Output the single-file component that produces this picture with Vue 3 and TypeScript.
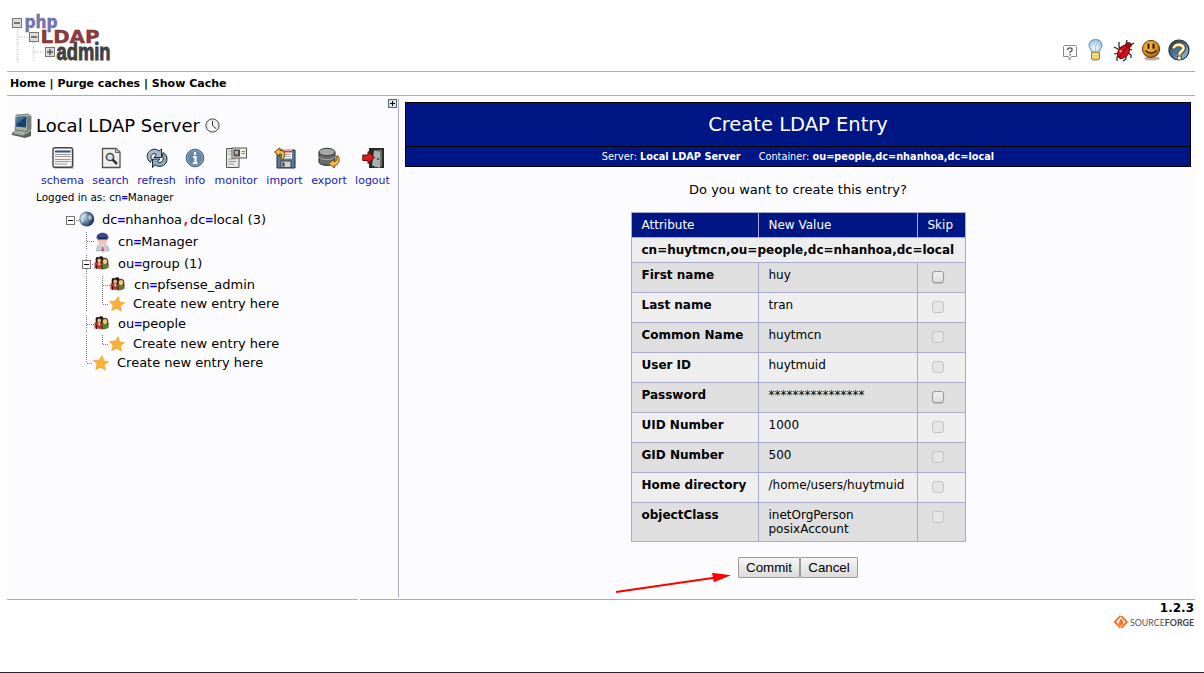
<script setup lang="ts">
interface Tool { name: string; label: string; width: number }
interface Part { t: string; c?: string }
interface Node {
  h: number
  indent: number
  lines: string
  box?: [number, number]
  icon: 'globe' | 'user' | 'group' | 'star'
  gap: number
  shift: number
  parts: Part[]
}
interface Row { attr: string; values: string[]; enabled: boolean }

const tools: Tool[] = [
  { name: 'schema', label: 'schema', width: 43 },
  { name: 'search', label: 'search', width: 37 },
  { name: 'refresh', label: 'refresh', width: 39 },
  { name: 'info', label: 'info', width: 22 },
  { name: 'monitor', label: 'monitor', width: 44 },
  { name: 'import', label: 'import', width: 37 },
  { name: 'export', label: 'export', width: 36 },
  { name: 'logout', label: 'logout', width: 35 },
]

const createParts: Part[] = [{ t: 'Create new entry here' }]

const nodes: Node[] = [
  { h: 22, indent: 17, lines: 'M14 12.5H18', box: [4.5, 8.5], icon: 'globe', gap: 7, shift: 0,
    parts: [{ t: 'dc' }, { t: '=', c: 'eq' }, { t: 'nhanhoa' }, { t: ',', c: 'comma' }, { t: 'dc' }, { t: '=', c: 'eq' }, { t: 'local (3)' }] },
  { h: 22, indent: 33, lines: 'M24.5 2V19M25 11.5H33', icon: 'user', gap: 7, shift: 1,
    parts: [{ t: 'cn' }, { t: '=', c: 'eq' }, { t: 'Manager' }] },
  { h: 23, indent: 32, lines: 'M24.5 3V22M30 12.5H33', box: [20.5, 8.5], icon: 'group', gap: 8, shift: -1,
    parts: [{ t: 'ou' }, { t: '=', c: 'eq' }, { t: 'group (1)' }] },
  { h: 19, indent: 48, lines: 'M24.5 1V18M40.5 1V18M41 10.5H48', icon: 'group', gap: 8, shift: -1,
    parts: [{ t: 'cn' }, { t: '=', c: 'eq' }, { t: 'pfsense_admin' }] },
  { h: 19, indent: 47, lines: 'M24.5 0V18M40.5 0V10M41 10.5H48', icon: 'star', gap: 8, shift: 0, parts: createParts },
  { h: 21, indent: 32, lines: 'M24.5 2V19M25 11.5H33', icon: 'group', gap: 8, shift: -1,
    parts: [{ t: 'ou' }, { t: '=', c: 'eq' }, { t: 'people' }] },
  { h: 19, indent: 47, lines: 'M24.5 1V18M40.5 1V10M41 10.5H48', icon: 'star', gap: 8, shift: 0, parts: createParts },
  { h: 19, indent: 31, lines: 'M24.5 0V10M25 10.5H32', icon: 'star', gap: 8, shift: 0, parts: createParts },
]

const rows: Row[] = [
  { attr: 'First name', values: ['huy'], enabled: true },
  { attr: 'Last name', values: ['tran'], enabled: false },
  { attr: 'Common Name', values: ['huytmcn'], enabled: false },
  { attr: 'User ID', values: ['huytmuid'], enabled: false },
  { attr: 'Password', values: ['****************'], enabled: true },
  { attr: 'UID Number', values: ['1000'], enabled: false },
  { attr: 'GID Number', values: ['500'], enabled: false },
  { attr: 'Home directory', values: ['/home/users/huytmuid'], enabled: false },
  { attr: 'objectClass', values: ['inetOrgPerson', 'posixAccount'], enabled: false },
]
</script>

<template>
  <div class="page">
    <header class="top">
      <svg class="logo" width="116" height="54" viewBox="8 13 116 54">
        <path d="M17.5 29V62M33.5 42V62M19 37H29M35 52H45" stroke="#c4c4c4" stroke-dasharray="1 1.5" fill="none" stroke-width="1.6" />
        <g fill="#ddd" stroke="#777">
          <rect x="12.5" y="18.5" width="9" height="9" />
          <rect x="29.5" y="32.5" width="9" height="9" />
          <rect x="45.5" y="47.5" width="9" height="9" />
        </g>
        <path d="M14 23H20M31 37H37M47 52H53M50 49V55" stroke="#555" stroke-width="1.5" />
        <text x="24.5" y="27.500" class="lg php" textLength="33" lengthAdjust="spacingAndGlyphs">php</text>
        <text x="40.5" y="42.800" class="lg ldap" textLength="59" lengthAdjust="spacingAndGlyphs">LDAP</text>
        <g transform="translate(56.5 59.8) scale(1 1.12)"><text x="0" y="0" class="lg adm" textLength="54" lengthAdjust="spacingAndGlyphs">admin</text></g>
      </svg>
      <svg class="status" width="132" height="26" viewBox="1060 37 132 26">
        <defs>
          <radialGradient id="smile" cx=".4" cy=".35" r=".7"><stop offset="0" stop-color="#f5b840" /><stop offset=".6" stop-color="#dd9420" /><stop offset="1" stop-color="#925006" /></radialGradient>
          <linearGradient id="help" x1="0" y1="0" x2="1" y2="1"><stop offset="0" stop-color="#1f4160" /><stop offset=".5" stop-color="#4a7ba5" /><stop offset="1" stop-color="#b0d2e8" /></linearGradient>
          <radialGradient id="bulb" cx=".45" cy=".6" r=".6"><stop offset="0" stop-color="#fff" /><stop offset="1" stop-color="#8fbdec" /></radialGradient>
        </defs>
        <path d="M1064.5 45.5H1075.5L1076.5 46.5V56.500H1071.500L1069.500 60L1068.500 56.500H1063.500V46.500Z" fill="#fbfbfb" stroke="#888" />
        <path d="M1067.800 50V48.500Q1070 47 1072 48.700V50.500L1070 52V53M1070 54V55.500" fill="none" stroke="#555" stroke-width="1.300" />
        <path d="M1092 53C1092 50 1089 48.500 1089 45.200C1089 41.500 1092 39.500 1095.500 39.500S1102 41.500 1102 45.200C1102 48.500 1099 50 1099 53Z" fill="url(#bulb)" stroke="#6a8fb8" />
        <path d="M1093 43L1095.500 46L1098 43M1095.500 46V52" fill="none" stroke="#b6c9d8" />
        <rect x="1091.500" y="52" width="8" height="8" rx="2" fill="#e9c35a" stroke="#a6731f" /><path d="M1092 54.500H1099M1092 57H1099" stroke="#fff0b0" />
        <path d="M1119 42V47L1123 51M1114 47L1118 49L1122 52M1114 54L1120 53M1117 61V57L1121 55M1123 61L1126 59V56M1127 52L1131 55V58M1127 48L1132 50M1129 46L1134 43M1126 45L1127 40M1120 59L1122 57" stroke="#1a1a1a" stroke-width="1.200" fill="none" />
        <ellipse cx="1123.500" cy="51.800" rx="5" ry="7.400" transform="rotate(38 1123.500 51.800)" fill="#d80d1d" stroke="#6c0008" />
        <ellipse cx="1128.500" cy="45" rx="3" ry="2.600" fill="#b50014" stroke="#3a0004" stroke-width=".6" /><path d="M1127 47L1119.500 57" stroke="#5a0008" /><path d="M1119.500 50.500L1122 52" stroke="#ff9a9a" stroke-width="1.500" />
        <ellipse cx="1152" cy="58.500" rx="8" ry="2" fill="#000" opacity=".3" />
        <circle cx="1151" cy="49" r="8.600" fill="url(#smile)" stroke="#6b3b08" />
        <path d="M1148.500 44.500V48M1153.500 44.500V48" stroke="#2a1500" stroke-width="2" stroke-linecap="round" /><path d="M1145.500 50.500Q1151 56 1156.500 50.500" fill="none" stroke="#2a1500" stroke-width="1.400" />
        <circle cx="1179" cy="50" r="10" fill="url(#help)" stroke="#24333f" stroke-width="1.200" />
        <path d="M1173.500 49C1173.500 43 1184 43 1183.500 48.500C1183 51.500 1179.300 51.500 1179.300 55M1179.300 56V60" fill="none" stroke="#4c3c1a" stroke-width="4.800" />
        <path d="M1173.700 48.500C1174 43.500 1184 43.500 1183.400 48.500C1182.800 51.500 1179.300 51.500 1179.300 54.800M1179.300 56.600V59.500" fill="none" stroke="#fff1bd" stroke-width="3" />
      </svg>
    </header>

    <nav class="menu"><a>Home</a> | <a>Purge caches</a> | <a>Show Cache</a></nav>

    <main class="body">
      <aside class="side">
        <div class="plusline">
          <svg width="9" height="9"><rect x=".5" y=".5" width="8" height="8" fill="#d4e3e6" stroke="#56666a" /><path d="M2 4.500H7M4.500 2V7" stroke="#000" /></svg>
        </div>
        <div class="server">
          <svg class="computer" width="23" height="26" viewBox="0 0 23 26">
            <path d="M2 19L15 21L20 17V23L14 25L1 22Z" fill="#59615f" />
            <path d="M5 2L17 1L20 3V16L16 19L4 17Z" fill="#a9afa4" stroke="#6e7774" stroke-width=".8" />
            <path d="M16 4L20 3V16L16 19Z" fill="#75817e" />
            <path d="M6 4L15.500 3.500L15 14.500L5 13.500Z" fill="#15436d" /><path d="M6 4L15.500 3.500L5.300 11Z" fill="#3e729f" />
            <path d="M5 17L16 18.500L13 23L1 20.500Z" fill="#c1c3b6" stroke="#555f5e" stroke-width=".8" /><path d="M5 18.500L14 20M4 19.700L13 21.300" stroke="#777" stroke-dasharray="1 1" />
          </svg>
          <span class="sname">Local LDAP Server</span>
          <svg width="15" height="15"><circle cx="7.500" cy="7.500" r="6.600" fill="#f8f8f8" stroke="#444" /><circle cx="7.500" cy="7.500" r="5" fill="none" stroke="#bbb" stroke-dasharray="1 1.600" /><path d="M7.500 3V7.500L11 10.500" fill="none" stroke="#333" /></svg>
        </div>

        <div class="tools">
          <a v-for="t in tools" :key="t.name" class="tool" :style="{ width: t.width + 'px' }">
            <svg width="22" height="22" viewBox="0 0 22 22">
              <g v-if="t.name === 'schema'">
                <rect x="2" y="2" width="20" height="20" rx="1" fill="#aaa" opacity=".6" /><rect x="1" y=".800" width="19.500" height="19.500" rx="1.500" fill="#f5f5f5" stroke="#444" stroke-width="1.400" />
                <path d="M3 4.500H18.500" stroke="#2c4f88" stroke-width="2" /><path d="M3 7.500H18.500M3 9.500H18.500M3 12.500H18.500M3 14.500H18.500M3 17H15" stroke="#999" />
              </g>
              <g v-else-if="t.name === 'search'">
                <path d="M2.500 1.500H16L20 5V20.500H2.500Z" fill="#efefea" stroke="#555148" stroke-width="1.300" /><path d="M15.500 1.500V5.500H20" fill="#bbb" stroke="#666" />
                <circle cx="10" cy="10" r="3.600" fill="#d5e3ea" stroke="#444" stroke-width="1.500" /><path d="M12.500 12.500L17 17" stroke="#333" stroke-width="2.500" />
              </g>
              <g v-else-if="t.name === 'refresh'" stroke="#1e2b38" stroke-width="1" stroke-linejoin="round">
                <path d="M4.500 15.500C-.5 12 .5 5 5.500 2.800C8.500 1.500 11.500 2.500 13 4L15.500 2V10.500H8L10.500 7.500C7 5 3.500 8.500 5.500 12.500Z" fill="#a5b9cc" />
                <path d="M17 5.500C22.500 8.500 22 15.500 17.500 18.500C14.500 20 11 19.500 9 17.800L6.500 20.500V12H14L11.500 14.800C15 17 18.500 13.500 16.500 9Z" fill="#8fa8be" />
              </g>
              <g v-else-if="t.name === 'info'">
                <circle cx="11" cy="11" r="8.800" fill="#6487b0" stroke="#44566b" /><circle cx="11" cy="11" r="7.800" fill="none" stroke="#8aa8c8" />
                <path d="M11 5V8M9 10H11.500V15.500M8.800 16H13.500" stroke="#fff" stroke-width="2.200" fill="none" />
              </g>
              <g v-else-if="t.name === 'monitor'">
                <path d="M1.500 1.500H14V20.500H1.500Z" fill="#e6e6e2" stroke="#55564f" /><path d="M3.500 12H11M3.500 14.500H11M3.500 17H9" stroke="#999" /><path d="M3 4H6M3 7H6" stroke="#aaa" />
                <rect x="7" y="1" width="14.500" height="10" fill="#f1efe7" stroke="#55564f" /><rect x="8.500" y="2.500" width="6.500" height="7" fill="#464b55" /><rect x="10" y="4" width="3" height="3.500" fill="#e4a873" /><path d="M16.500 4.500H20M16.500 6.500H20" stroke="#888" />
              </g>
              <g v-else-if="t.name === 'import'">
                <path d="M3 3H21V21H3Z" fill="#577b98" stroke="#1f2e3a" /><rect x="9" y="2.500" width="9" height="9" fill="#fff" /><path d="M9 4.500H18" stroke="#d43838" stroke-width="2" /><path d="M10 7.500H17M10 9.500H17" stroke="#aaa" />
                <rect x="7" y="14" width="10" height="6.500" fill="#d2d2d0" stroke="#444" /><path d="M9.500 15.500V19.500" stroke="#333" stroke-width="2" />
                <path d="M0.500 5L6 .800V3.500C11 3 12.500 8.500 8.500 12.500L6.500 11.500C8.500 8 7.500 6.500 5.500 7V9.500Z" fill="#edb947" stroke="#6d4807" />
              </g>
              <g v-else-if="t.name === 'export'">
                <path d="M1 5V15C1 19.500 17 19.500 17 15V5Z" fill="#666968" stroke="#292b2b" /><path d="M1 10C3 13.500 15 13.500 17 10" fill="none" stroke="#a8aaa9" /><ellipse cx="9" cy="5" rx="8" ry="3.700" fill="#a6a9a8" stroke="#393b3b" />
                <path d="M20 9C23 14 20 18 16.500 18.500V21L10.500 16.500L16 12.500V15C18.500 14.500 19.500 12 18.500 9Z" fill="#edba50" stroke="#7a5110" />
              </g>
              <g v-else>
                <rect x="7" y="1" width="15" height="20" fill="#292a28" /><path d="M12 3.500L20 2.500V19.500L12 20.500Z" fill="#65716d" /><path d="M12 3.500L18 5V21L10 18.500Z" fill="#a7b1a9" /><circle cx="16" cy="12" r="1" fill="#333" />
                <path d="M.800 8H6V4.500L12.500 10.500L6 16.500V13.500H.800Z" fill="#db1d18" stroke="#620606" />
              </g>
            </svg>
            <span>{{ t.label }}</span>
          </a>
        </div>

        <div class="logged">Logged in as: cn<b class="eq">=</b>Manager</div>

        <div class="tree">
          <div v-for="(n, i) in nodes" :key="i" class="node" :style="{ height: n.h + 'px' }">
            <svg class="guide" :width="n.indent" :height="n.h">
              <path :d="n.lines" stroke="#777" stroke-dasharray="1 1" fill="none" />
              <g v-if="n.box">
                <rect :x="n.box[0]" :y="n.box[1]" width="8" height="8" fill="#fff" stroke="#777" />
                <path :d="`M${n.box[0] + 1.5} ${n.box[1] + 4}h5`" stroke="#000" stroke-width="1" />
              </g>
            </svg>
            <svg class="nicon" :style="{ marginTop: n.shift * 2 + 'px', marginRight: n.gap + 'px' }" width="16" :height="n.icon === 'user' ? 20 : 16" :viewBox="n.icon === 'user' ? '0 0 16 20' : '0 0 16 16'">
              <g v-if="n.icon === 'globe'">
                <defs><radialGradient id="glb" cx=".3" cy=".4" r=".75"><stop offset="0" stop-color="#c2d4e2" /><stop offset=".5" stop-color="#5c7f9f" /><stop offset="1" stop-color="#0b1f3c" /></radialGradient></defs>
                <circle cx="7.700" cy="8" r="7.500" fill="url(#glb)" /><path d="M2 5L5 2L8 3L6 6L4 7L5 10L3 12L1.500 9ZM9 5L12 4L13 8L10 9Z" fill="#dfe7e9" opacity=".65" />
              </g>
              <g v-else-if="n.icon === 'user'">
                <path d="M1.500 19C1.500 14 4 12 7.500 12S14 14 14 19Z" fill="#c3cbe0" stroke="#9aa4bd" stroke-width=".6" /><path d="M5.500 12.500L7.500 15L10 12.500Z" fill="#fff" /><path d="M7.700 13.500L9 19H6.500Z" fill="#e03030" />
                <circle cx="7.500" cy="7.500" r="5.200" fill="#f1c4b0" /><path d="M1.500 6.500C1 -1.200 14 -1.200 13.500 6.500Q10 4.500 7.500 4.500T1.500 6.500Z" fill="#34479a" /><path d="M2.500 5.500Q7.500 3.500 12.500 5.500V7.500H2.500Z" fill="#222c62" />
              </g>
              <g v-else-if="n.icon === 'group'">
                <path d="M.500 13.500V8.500Q1 6 4.500 6Q8.500 6 8.500 10V14Z" fill="#c3352a" /><path d="M7.500 14.500V9.500Q8 7 11 7Q14.700 7.500 14.700 11V12.500Q12 15 7.500 14.500Z" fill="#5c8030" />
                <path d="M2 7C.500 1.500 4 1.500 5 2.500C6 .300 10 .800 9.500 4.500L8.500 8L5 9Z" fill="#1d130c" /><ellipse cx="5.200" cy="5.800" rx="2" ry="2.300" fill="#e5b286" />
                <path d="M8 5C8 2 14 1.500 14.300 6L14.500 10.500L12.500 9H8.500Z" fill="#5a4020" /><ellipse cx="11" cy="6.600" rx="2.200" ry="2.600" fill="#edca85" /><path d="M4 8.300L5.300 11L6.500 8.300Z" fill="#fff" /><path d="M2.500 10V14M8 10V14" stroke="#3c1a10" />
              </g>
              <path v-else d="M9.200 .700L10.700 5.900L15.600 6.700L11.500 9.600L12.300 15.200L7.900 12.200L2.700 14.600L4.100 9.300L.400 5.400L5.900 5.200Z" fill="#fbb034" stroke="#e99a25" stroke-width=".6" />
            </svg>
            <span class="label"><span v-for="(p, k) in n.parts" :key="k" :class="p.c">{{ p.t }}</span></span>
          </div>
        </div>
      </aside>

      <section class="content">
        <div class="banner">
          <h1>Create LDAP Entry</h1>
          <div class="sub"><span>Server: <b>Local LDAP Server</b></span><span>Container: <b>ou=people,dc=nhanhoa,dc=local</b></span></div>
        </div>
        <p class="ask">Do you want to create this entry?</p>

        <div class="grid">
          <div class="th">Attribute</div><div class="th">New Value</div><div class="th">Skip</div>
          <div class="dn">cn=huytmcn,ou=people,dc=nhanhoa,dc=local</div>
          <template v-for="(r, i) in rows" :key="r.attr">
            <div class="td attr" :class="{ odd: i % 2 === 0 }">{{ r.attr }}</div>
            <div class="td" :class="{ odd: i % 2 === 0 }"><div v-for="v in r.values" :key="v">{{ v }}</div></div>
            <div class="td skip" :class="{ odd: i % 2 === 0 }"><i class="check" :class="{ off: !r.enabled }"></i></div>
          </template>
        </div>

        <div class="actions">
          <button class="commit">Commit</button><button class="cancel">Cancel</button>
        </div>
        <svg class="arrow" width="120" height="26" viewBox="614 570 120 26"><path d="M616 592L716 577.500" stroke="#f00" stroke-width="2" /><path d="M731 575.300L712 572.800L713.800 582.300Z" fill="#f00" /></svg>
      </section>
    </main>

    <footer class="foot">
      <div class="rules"><i class="r1"></i><i class="r2"></i></div>
      <div class="ver">1.2.3</div>
      <div class="sf">
        <svg width="14" height="14" viewBox="0 0 14 14"><path d="M6.500 .800L.900 6.700L6.500 12.500" fill="none" stroke="#f2732b" stroke-width="1.900" /><path d="M7.500 1.200L13 7L7.500 12.900" fill="none" stroke="#f2732b" stroke-width="1.900" /><path d="M7 3.500C10 6 10 10 7 10.500C4 10 4.500 7 7 3.500Z" fill="#f2732b" /></svg>
        <svg width="65" height="12"><text x="0" y="9.500" textLength="64" lengthAdjust="spacingAndGlyphs" class="sft">SOURCE<tspan class="sfb">FORGE</tspan></text></svg>
      </div>
    </footer>
  </div>
</template>

<style>
body { background: #fff; overflow: hidden; }
</style>

<style scoped>
* { box-sizing: border-box; }
.page { height: 673px; padding: 0 9px 0 7px; border-bottom: 1px solid #1e2a2f; font-family: "DejaVu Sans", sans-serif; font-size: 13px; color: #000; display: flex; flex-direction: column; white-space: nowrap; }
svg { display: block; flex: none; }
.top { height: 72px; border-bottom: 1px solid #aaaacc; display: flex; justify-content: space-between; align-items: flex-start; }
.logo { margin: 13px 0 0 1px; }
.status { margin: 37px 3px 0 0; }
.lg { font-weight: bold; font-family: "DejaVu Sans", sans-serif; }
.php { font-size: 17px; fill: #7476b0; stroke: #5c5e96; stroke-width: .4px; }
.ldap { font-size: 18.5px; fill: #8d3b40; stroke: #6d282d; stroke-width: .4px; }
.adm { font-family: "Liberation Sans", sans-serif; font-size: 21px; fill: #404040; stroke: #404040; stroke-width: .8px; }
.menu { height: 24px; border-bottom: 1px solid #aaaacc; padding-left: 3px; font-size: 11px; font-weight: bold; line-height: 23px; }
.body { height: 503px; display: flex; background: #fcfcff; }
.side { width: 392px; height: 498px; margin-top: 3px; border-right: 1px solid #aaaacc; display: flex; flex-direction: column; }
.plusline { height: 13px; display: flex; justify-content: flex-end; padding-right: 1px; }
.server { height: 26px; display: flex; align-items: center; padding-left: 4px; font-size: 18px; }
.computer { margin-top: 2px; }
.sname { margin: 0 5px 0 2px; }
.tools { display: flex; gap: 8px; padding: 9px 0 0 34px; }
.tool { display: flex; flex-direction: column; align-items: center; font-size: 11px; color: #1a1aaa; line-height: 14px; }
.tool span { margin-top: 5px; }
.logged { margin: 3px 0 0 29px; font-size: 10.45px; line-height: 13px; }
.eq { color: #00f; font-weight: bold; font-family: "DejaVu Sans Mono", monospace; }
.comma { color: #f00; font-weight: bold; font-family: "DejaVu Sans Mono", monospace; }
.tree { margin: 4px 0 0 55px; }
.node { display: flex; align-items: center; }
.content { flex: 1; display: flex; flex-direction: column; align-items: center; padding-top: 6px; padding-left: 6px; padding-right: 4px; position: relative; }
.banner { width: 100%; height: 65px; background: #001684; border: 1px solid #000; color: #fff; }
h1 { margin: 0; height: 44px; line-height: 43px; border-bottom: 1px solid #000; text-align: center; font-weight: normal; font-size: 19.5px; }
.sub { display: flex; justify-content: center; gap: 18px; line-height: 19px; font-size: 9.75px; }
.ask { margin: 14px 0 0; height: 17px; line-height: 17px; font-size: 13px; }
.grid { margin-top: 14px; display: grid; grid-template-columns: 126px 158px 47px; grid-template-rows: 24px 24px repeat(8, 29px) 38px; gap: 1px; padding: 1px; background: #aaaacc; font-size: 12px; line-height: 14px; }
.th { background: #001684; color: #fff; padding-left: 10px; line-height: 24px; }
.dn { grid-column: 1 / 4; background: #eee; font-weight: bold; padding-left: 10px; line-height: 24px; }
.td { background: #eee; padding: 5px 0 0 10px; }
.td.odd { background: #dfdfdf; }
.attr { font-weight: bold; }
.skip { padding: 8px 0 0 14px; }
.check { display: block; width: 12px; height: 12px; border: 1px solid #999; border-radius: 3px; background: linear-gradient(#f0f0f0, #dedede); box-shadow: 0 1px 1px rgba(0, 0, 0, .15); }
.check.off { border-color: #c4c4c4; background: #e5e5e5; box-shadow: none; }
.actions { margin-top: 15px; display: flex; }
button { height: 21px; padding: 0; border: 1px solid #9a9a9a; border-radius: 1px; background: linear-gradient(#f5f5f5, #dcdcdc); font: 13.33px "Liberation Sans", sans-serif; color: #000; }
.commit { width: 62px; }
.cancel { width: 58px; }
.arrow { position: absolute; left: 215px; top: 474px; }
.foot { flex: 1; display: flex; flex-direction: column; align-items: flex-end; }
.rules { width: 100%; height: 1px; display: flex; gap: 2px; }
.rules i { height: 1px; background: #aaaacc; }
.r1 { width: 351px; }
.r2 { flex: 1; }
.ver { font-weight: bold; font-size: 12px; line-height: 14px; margin: 1px 1px 0 0; }
.sf { display: flex; align-items: center; gap: 2px; }
.sft { font: 9.5px Lato, sans-serif; fill: #555; }
.sfb { font-weight: bold; fill: #444; }
</style>
